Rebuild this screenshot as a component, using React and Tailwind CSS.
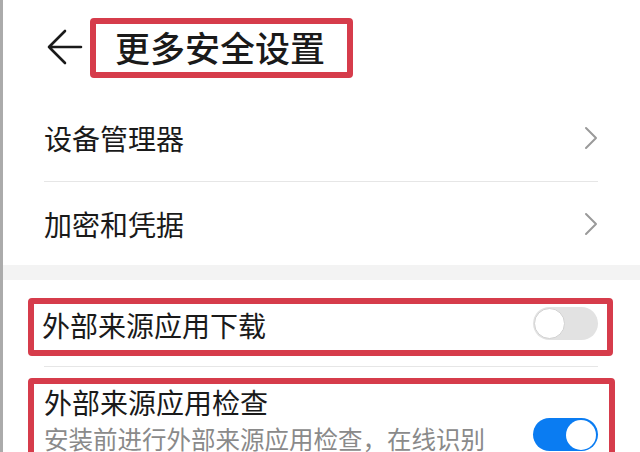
import React from 'react';

const font = { fontFamily: '"Noto Sans CJK SC", "Noto Sans", sans-serif' };

const Chevron = () => (
    <svg width="14" height="24" viewBox="0 0 14 24" fill="none" className="shrink-0">
        <polyline points="2,2 12,12 2,22" stroke="#9a9a9a" strokeWidth="2" strokeLinecap="round" strokeLinejoin="round" />
    </svg>
);

const Toggle = ({ on }) => (
    <div
        className={
            on
                ? 'w-[65px] h-[33px] rounded-full bg-[#0a7cf2] flex items-center justify-end px-[2px] shrink-0'
                : 'w-[65px] h-[33px] rounded-full bg-[#e2e2e2] flex items-center justify-start px-[1px] shrink-0'
        }
    >
        <div
            className={
                on
                    ? 'w-[30px] h-[30px] rounded-full bg-white'
                    : 'w-[31px] h-[31px] rounded-full bg-white border border-[#d2d2d2]'
            }
        />
    </div>
);

const Mark = ({ className }) => (
    <span className={'absolute border-[6px] border-[#d63c4b] rounded-[4px] pointer-events-none ' + className} />
);

export default function App() {
    return (
        <div style={font} className="w-[640px] h-[452px] overflow-hidden bg-white border-l-[3px] border-[#ababab] text-[#1a1a1a]">
            {/* header */}
            <div className="relative h-[94px] flex items-center pl-[43px]">
                <svg width="38" height="38" viewBox="0 0 38 38" fill="none" className="shrink-0">
                    <path d="M3 19 H35 M19 3 L3 19 L19 35" stroke="#1a1a1a" strokeWidth="2.6" strokeLinecap="round" strokeLinejoin="round" />
                </svg>
                <h1 className="ml-[31px] text-[35px] leading-[44px] font-medium">更多安全设置</h1>
                <Mark className="left-[87px] top-[18px] w-[263px] h-[60px]" />
            </div>

            {/* list group 1 */}
            <div className="pl-[41px] pr-[42px]">
                <div className="h-[87px] flex items-center justify-between">
                    <span className="text-[28px] leading-[36px]">设备管理器</span>
                    <Chevron />
                </div>
                <div className="h-px bg-[#e6e6e6]" />
                <div className="h-[83px] flex items-center justify-between">
                    <span className="text-[28px] leading-[36px]">加密和凭据</span>
                    <Chevron />
                </div>
            </div>

            <div className="h-[15px] bg-[#f3f3f3]" />

            {/* list group 2 */}
            <div className="relative h-[86px] flex items-center justify-between pl-[39px] pr-[42px]">
                <span className="text-[28px] leading-[36px] mt-[4px]">外部来源应用下载</span>
                <Toggle on={false} />
                <Mark className="left-[25px] right-[27px] top-[18px] bottom-[10px]" />
            </div>
            <div className="mx-[41px] mr-[42px] h-px bg-[#e6e6e6]" />
            <div className="relative flex items-start justify-between pl-[41px] pr-[42px]">
                <div className="pt-[17px]">
                    <div className="text-[28px] leading-[36px]">外部来源应用检查</div>
                    <div className="text-[24.5px] leading-[34px] text-[#8a8a8a] mt-[2px]">安装前进行外部来源应用检查，在线识别</div>
                </div>
                <div className="mt-[51px]">
                    <Toggle on />
                </div>
                <Mark className="left-[25px] right-[25px] top-[11px] h-[120px]" />
            </div>
        </div>
    );
}
